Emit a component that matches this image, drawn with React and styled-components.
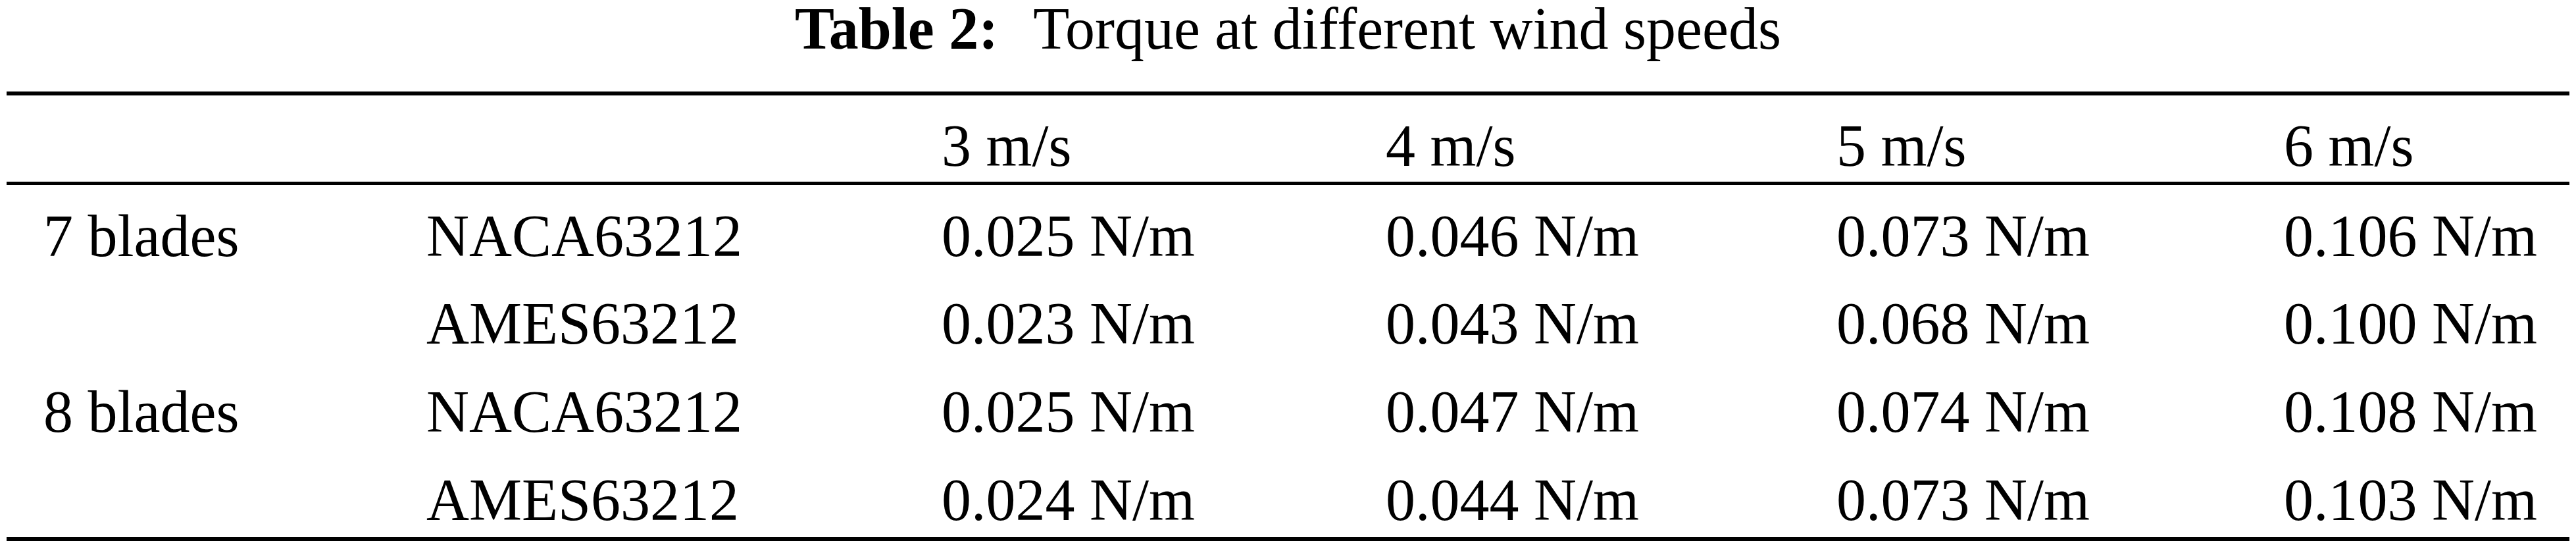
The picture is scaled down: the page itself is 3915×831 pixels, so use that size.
import React from "react";
import styled, { createGlobalStyle } from "styled-components";

const Global = createGlobalStyle`
  html, body { margin: 0; padding: 0; background: #ffffff; }
  body { font-family: "Liberation Serif", "Times New Roman", serif; color: #000; }
`;

const Page = styled.div`
  width: 3915px;
  padding: 0 10px;
  box-sizing: border-box;
`;

const Caption = styled.div`
  font-size: 90px;
  line-height: 88px;
  text-align: center;
  white-space: nowrap;
  margin-bottom: 51px;
`;

const Label = styled.strong`
  font-weight: bold;
  margin-right: 53px;
`;

const Rule = styled.div`
  height: ${(p) => p.$thick}px;
  background: #000;
`;

const Section = styled.div`
  display: grid;
  row-gap: ${(p) => p.$gap || 0}px;
  padding-top: ${(p) => p.$top}px;
  padding-bottom: ${(p) => p.$bottom}px;
`;

const Row = styled.div`
  display: grid;
  grid-template-columns: 638px 783px 675px 685px 680px 1fr;
  font-size: 90px;
  line-height: 100px;
  height: 100px;
  white-space: nowrap;
`;

const Cell = styled.div`
  padding-left: ${(p) => (p.$first ? 56 : 0)}px;
`;

const speeds = ["3 m/s", "4 m/s", "5 m/s", "6 m/s"];

const rows = [
  ["7 blades", "NACA63212", "0.025 N/m", "0.046 N/m", "0.073 N/m", "0.106 N/m"],
  ["", "AMES63212", "0.023 N/m", "0.043 N/m", "0.068 N/m", "0.100 N/m"],
  ["8 blades", "NACA63212", "0.025 N/m", "0.047 N/m", "0.074 N/m", "0.108 N/m"],
  ["", "AMES63212", "0.024 N/m", "0.044 N/m", "0.073 N/m", "0.103 N/m"],
];

export default function App() {
  return (
    <Page>
      <Global />
      <Caption>
        <Label>Table 2:</Label>Torque at different wind speeds
      </Caption>
      <Rule $thick={6} />
      <Section $top={27} $bottom={4}>
        <Row>
          <Cell $first />
          <Cell />
          {speeds.map((s) => (
            <Cell key={s}>{s}</Cell>
          ))}
        </Row>
      </Section>
      <Rule $thick={5} />
      <Section $top={27.6} $bottom={6.4} $gap={33.67}>
        {rows.map((r, i) => (
          <Row key={i}>
            {r.map((c, j) => (
              <Cell key={j} $first={j === 0}>
                {c}
              </Cell>
            ))}
          </Row>
        ))}
      </Section>
      <Rule $thick={6} />
    </Page>
  );
}
